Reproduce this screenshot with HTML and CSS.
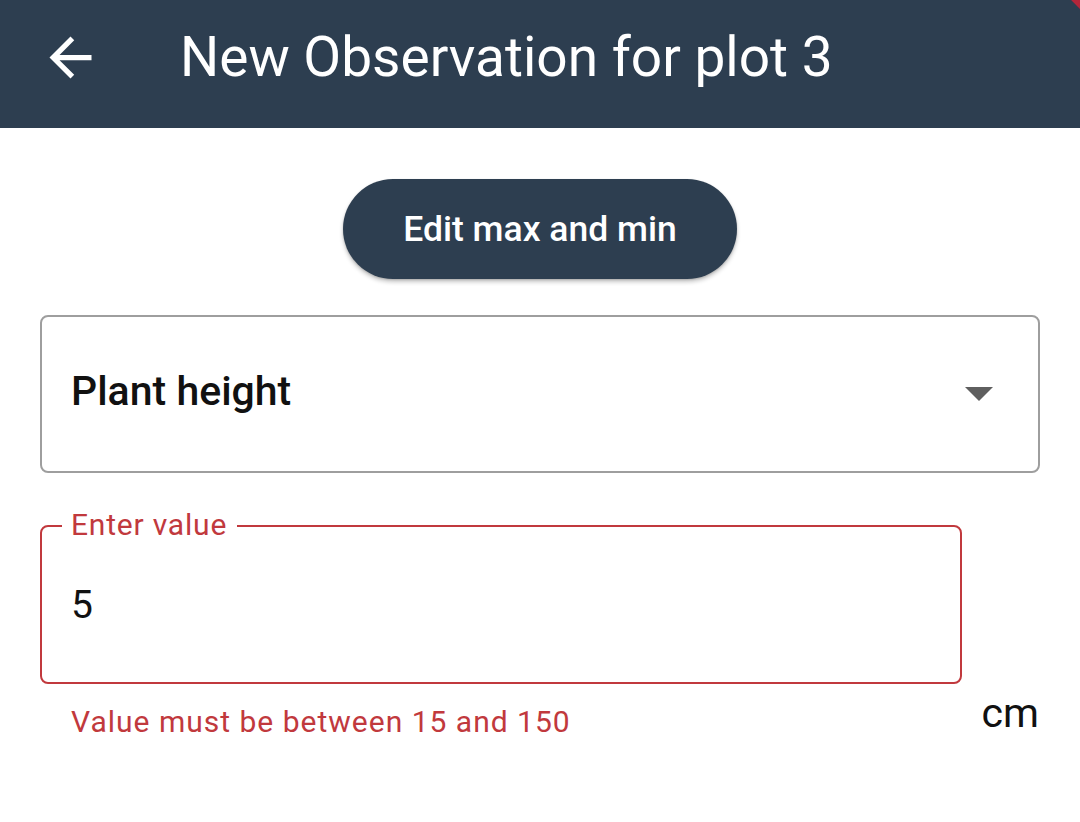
FILE: index.html
```html
<!DOCTYPE html>
<html lang="en">
<head>
<meta charset="utf-8">
<title>New Observation for plot 3</title>
<link rel="stylesheet" href="styles.css">
</head>
<body>
<header class="appbar">
  <button class="back" aria-label="Back">
    <svg viewBox="0 0 24 24" width="63" height="63"><path fill="#ffffff" d="M20 11H7.83l5.59-5.59L12 4l-8 8 8 8 1.41-1.41L7.83 13H20v-2z"/></svg>
  </button>
  <h1 class="title">New Observation for plot 3</h1>
  <div class="debug-corner"></div>
</header>
<main class="content">
  <div class="btn-row">
    <button class="pill-btn">Edit max and min</button>
  </div>
  <div class="dropdown">
    <span class="dropdown-text">Plant height</span>
    <svg class="dropdown-arrow" viewBox="0 0 28 14" width="28" height="14"><path fill="#5f5f5f" d="M0 0h28L14 14z"/></svg>
  </div>
  <div class="value-row">
    <div class="field-col">
      <div class="field">
        <span class="field-label">Enter value</span>
        <span class="field-value">5</span>
      </div>
      <div class="field-error">Value must be between 15 and 150</div>
    </div>
    <div class="unit">cm</div>
  </div>
</main>
</body>
</html>
```
FILE: styles.css
```css
* { box-sizing: border-box; }
html, body { margin: 0; padding: 0; background: #ffffff; }
body { font-family: Roboto, "Noto Sans", Arial, sans-serif; color: #111; width: 1080px; height: 822px; overflow: hidden; }

.appbar {
  position: relative;
  height: 128px;
  background: #2d3e50;
  display: flex;
  align-items: center;
  padding: 0 0 14px 39px;
  overflow: hidden;
}
.back {
  background: none;
  border: 0;
  padding: 0;
  width: 63px;
  height: 63px;
  display: flex;
  align-items: center;
  justify-content: center;
}
.back svg { display: block; }
.title {
  margin: 0 0 0 78px;
  color: #ffffff;
  font-size: 55px;
  font-weight: 400;
  line-height: 1;
  letter-spacing: 0;
}
.debug-corner {
  position: absolute;
  top: -8px;
  right: -40px;
  width: 80px;
  height: 14px;
  background: #b3263a;
  transform: rotate(45deg);
  transform-origin: center;
}

.content { padding: 51px 40px 0 40px; }
.btn-row { display: flex; justify-content: center; }
.pill-btn {
  width: 394px;
  height: 100px;
  border: 0;
  border-radius: 50px;
  background: #2d3e50;
  color: #ffffff;
  font-family: Roboto, sans-serif;
  font-size: 35.5px;
  font-weight: 500;
  box-shadow: 0 3px 4px rgba(0,0,0,0.22), 0 1px 2px rgba(0,0,0,0.15);
  padding: 0;
}

.dropdown {
  margin-top: 36px;
  height: 158px;
  border: 2px solid #9e9e9e;
  border-radius: 8px;
  display: flex;
  align-items: center;
  justify-content: space-between;
  padding: 0 45px 6px 29px;
}
.dropdown-text { font-size: 41px; font-weight: 500; color: #111; }
.dropdown-arrow { display: block; margin-top: 6px; }

.value-row {
  margin-top: 52px;
  display: flex;
  align-items: flex-end;
  justify-content: space-between;
}
.field-col { width: 922px; }
.field {
  position: relative;
  height: 159px;
  border: 2px solid #c1393d;
  border-radius: 8px;
  display: flex;
  align-items: center;
  padding: 0 0 0 29px;
}
.field-label {
  position: absolute;
  top: -19px;
  left: 20px;
  padding: 0 10px 0 9px;
  background: #ffffff;
  color: #c1393d;
  font-size: 30px;
  line-height: 34px;
  letter-spacing: 0.8px;
}
.field-value { font-size: 39px; color: #111; }
.field-error {
  margin-top: 20px;
  padding-left: 31px;
  color: #c1393d;
  font-size: 30px;
  line-height: 36px;
  letter-spacing: 1px;
}
.unit {
  font-size: 41px;
  color: #111;
  line-height: 1;
  margin-bottom: 6px;
  margin-right: 1px;
}
```
